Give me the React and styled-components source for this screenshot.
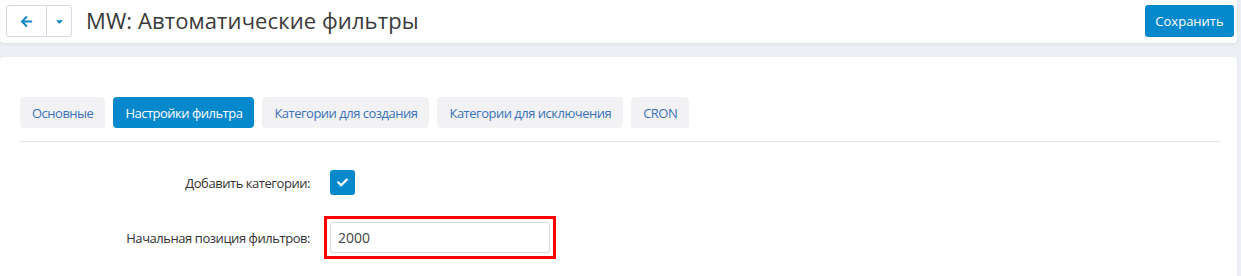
import React from 'react';
import styled, { createGlobalStyle } from 'styled-components';
import { FaArrowLeft, FaCaretDown, FaCheck } from 'react-icons/fa';

const GlobalStyle = createGlobalStyle`
    html, body {
        margin: 0;
        padding: 0;
        background: #ebeef2;
        font-family: "Open Sans", "Noto Sans", sans-serif;
        color: #333;
    }
    * { box-sizing: border-box; }
`;

const Page = styled.div`
    width: 1241px;
    height: 276px;
    display: flex;
    flex-direction: column;
    overflow: hidden;
`;

const TopBar = styled.div`
    width: 1237px;
    height: 43px;
    flex-shrink: 0;
    background: #fff;
    border-radius: 0 0 4px 4px;
    box-shadow: 0 1px 3px rgba(0, 0, 0, 0.08);
    display: flex;
    align-items: center;
    padding: 0 3px 1px 6px;
`;

const BtnGroup = styled.div`
    display: flex;
    height: 32px;
    border: 1px solid #d4dbe3;
    border-radius: 3px;
    background: #fff;
`;

const GroupBtn = styled.button`
    width: ${p => p.$w}px;
    height: 100%;
    border: none;
    background: transparent;
    padding: 0;
    display: flex;
    align-items: center;
    justify-content: center;
    color: #0b86c9;
    & + & {
        border-left: 1px solid #d4dbe3;
    }
`;

const Title = styled.h1`
    margin: 0 0 2px 14px;
    font-size: 22px;
    font-weight: 400;
    color: #3a3a3a;
    letter-spacing: 0.1px;
    flex: 1;
`;

const SaveButton = styled.button`
    height: 32px;
    width: 89px;
    border: none;
    border-radius: 3px;
    background: #0588cc;
    color: #fff;
    font-family: inherit;
    font-size: 13px;
    padding: 0;
`;

const Card = styled.div`
    width: 1237px;
    flex: 1;
    margin-top: 14px;
    background: #fff;
    border-radius: 4px 4px 0 0;
    padding: 40px 17px 0 20px;
`;

const Tabs = styled.div`
    display: flex;
    gap: 8px;
    padding-bottom: 13px;
    border-bottom: 1px solid #e2e5eb;
`;

const Tab = styled.div`
    height: 31px;
    padding: 0 12px;
    display: flex;
    align-items: center;
    border-radius: 4px;
    font-size: 13px;
    letter-spacing: -0.5px;
    background: ${p => (p.$active ? '#0588cc' : '#f2f2f4')};
    color: ${p => (p.$active ? '#fff' : '#3a72b8')};
`;

const Form = styled.div`
    padding-top: 28px;
    display: flex;
    flex-direction: column;
    gap: 27px;
`;

const Row = styled.div`
    display: grid;
    grid-template-columns: 290px 1fr;
    column-gap: 20px;
    align-items: center;
`;

const Label = styled.label`
    text-align: right;
    font-size: 13px;
    letter-spacing: -0.45px;
    color: #333;
`;

const Checkbox = styled.span`
    width: 25px;
    height: 25px;
    border-radius: 3px;
    background: #0588cc;
    color: #fff;
    display: flex;
    align-items: center;
    justify-content: center;
`;

const Highlight = styled.div`
    width: 220px;
    outline: 3px solid #f00;
    outline-offset: 3px;
`;

const Input = styled.input`
    width: 220px;
    height: 31px;
    border: 1px solid #d4dbe3;
    border-radius: 3px;
    padding: 0 7px;
    font-family: inherit;
    font-size: 14px;
    color: #444;
    display: block;
`;

const tabs = [
    { name: 'Основные' },
    { name: 'Настройки фильтра', active: true },
    { name: 'Категории для создания' },
    { name: 'Категории для исключения' },
    { name: 'CRON' },
];

export default function App() {
    return (
        <Page>
            <GlobalStyle />
            <TopBar>
                <BtnGroup>
                    <GroupBtn $w={39}><FaArrowLeft size={13} /></GroupBtn>
                    <GroupBtn $w={25}><FaCaretDown size={11} /></GroupBtn>
                </BtnGroup>
                <Title>MW: Автоматические фильтры</Title>
                <SaveButton>Сохранить</SaveButton>
            </TopBar>
            <Card>
                <Tabs>
                    {tabs.map(t => (
                        <Tab key={t.name} $active={t.active}>{t.name}</Tab>
                    ))}
                </Tabs>
                <Form>
                    <Row>
                        <Label>Добавить категории:</Label>
                        <Checkbox><FaCheck size={11} /></Checkbox>
                    </Row>
                    <Row>
                        <Label>Начальная позиция фильтров:</Label>
                        <Highlight>
                            <Input defaultValue="2000" />
                        </Highlight>
                    </Row>
                </Form>
            </Card>
        </Page>
    );
}
